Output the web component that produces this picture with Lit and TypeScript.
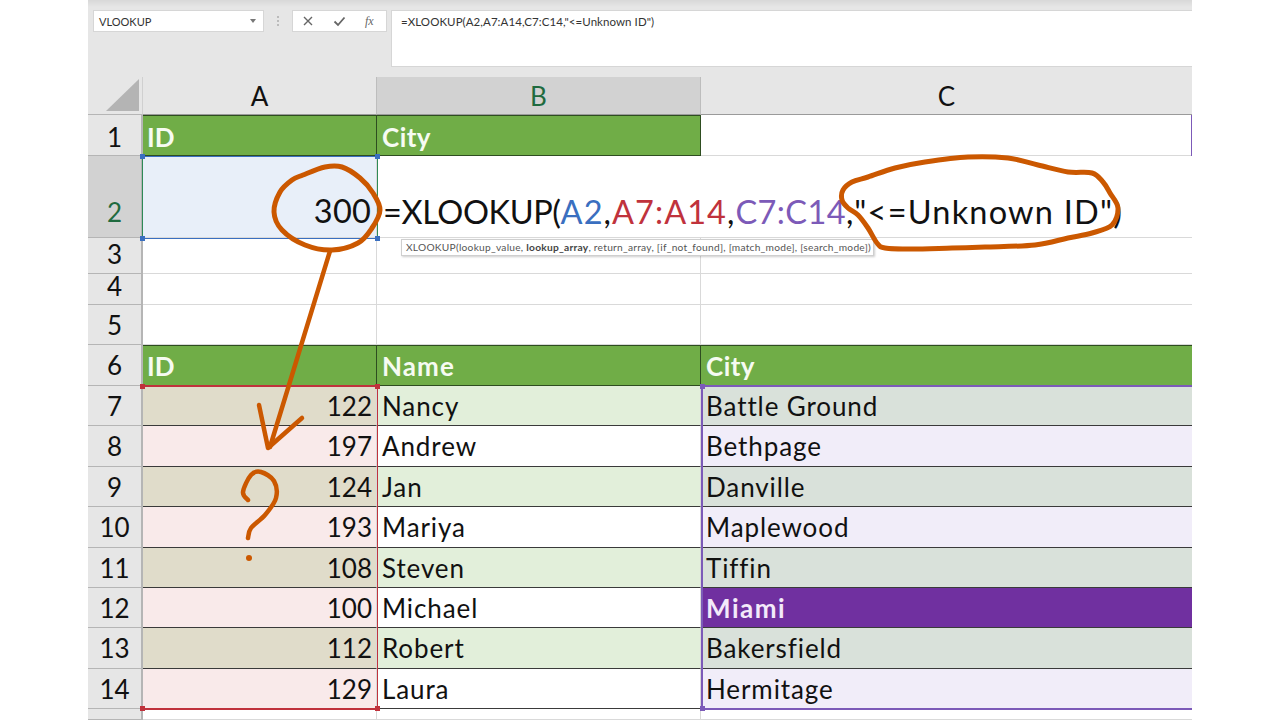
import { LitElement, html, css, svg } from "lit";
import { customElement } from "lit/decorators.js";

type P = [number, number];
function smooth(pts: P[], closed = false): string {
  const n = pts.length;
  const at = (i: number): P => (closed ? pts[(i + n) % n] : pts[Math.max(0, Math.min(n - 1, i))]);
  let d = `M${pts[0][0]} ${pts[0][1]}`;
  const last = closed ? n : n - 1;
  for (let i = 0; i < last; i++) {
    const p0 = at(i - 1), p1 = at(i), p2 = at(i + 1), p3 = at(i + 2);
    const c1: P = [p1[0] + (p2[0] - p0[0]) / 6, p1[1] + (p2[1] - p0[1]) / 6];
    const c2: P = [p2[0] - (p3[0] - p1[0]) / 6, p2[1] - (p3[1] - p1[1]) / 6];
    d += ` C${c1[0].toFixed(1)} ${c1[1].toFixed(1)} ${c2[0].toFixed(1)} ${c2[1].toFixed(1)} ${p2[0]} ${p2[1]}`;
  }
  return d;
}

const X0 = 88;
const circle: P[] = [[303,175],[325,167],[342,167],[360,178],[373,193],[380,210],[372,228],[358,243],[332,250],[305,245],[282,230],[274,212],[280,192],[292,180]];
const ellipse: P[] = [[842,200],[843,190],[852,182],[868,177],[895,168],[925,162],[968,157],[1008,158],[1038,165],[1068,172],[1092,173],[1103,182],[1110,193],[1118,208],[1112,225],[1092,233],[1068,238],[1035,245],[985,247],[952,248],[912,249],[885,248],[877,243],[868,228],[858,215],[848,208]];
const question: P[] = [[248,500],[243,492],[251,475],[261,472],[274,481],[276,498],[265,515],[251,528],[248,538]];

const table: [string, string, string, string][] = [
  ["7", "122", "Nancy", "Battle Ground"],
  ["8", "197", "Andrew", "Bethpage"],
  ["9", "124", "Jan", "Danville"],
  ["10", "193", "Mariya", "Maplewood"],
  ["11", "108", "Steven", "Tiffin"],
  ["12", "100", "Michael", "Miami"],
  ["13", "112", "Robert", "Bakersfield"],
  ["14", "129", "Laura", "Hermitage"],
];

@customElement("app-root")
export class AppRoot extends LitElement {
  static styles = css`
    :host { display: block; width: 1280px; height: 720px; background: #fff; overflow: hidden; font-family: Lato, "Liberation Sans", sans-serif; color: #111; }
    .stage { position: relative; width: 1104px; height: 720px; margin-left: 88px; background: #e6e6e6; overflow: hidden; display: flex; flex-direction: column; }
    .bar { height: 77px; flex: none; display: flex; align-items: flex-start; padding-top: 10px; box-sizing: border-box; padding-left: 5px; background: linear-gradient(#d8d8d8 0, #e6e6e6 7px); }
    .namebox { width: 171px; height: 22px; box-sizing: border-box; background: #fff; border: 1px solid #d6d6d6; font-size: 11px; display: flex; align-items: center; justify-content: space-between; padding: 0 7px 0 5px; color: #333; }
    .caret { width: 0; height: 0; border-left: 3px solid transparent; border-right: 3px solid transparent; border-top: 4px solid #777; }
    .dots { width: 28px; height: 22px; display: flex; flex-direction: column; align-items: center; justify-content: center; gap: 2px; }
    .dots i { width: 2px; height: 2px; background: #bbb; }
    .fxbox { width: 95px; height: 22px; box-sizing: border-box; background: #fff; border: 1px solid #d6d6d6; display: flex; align-items: center; gap: 19px; padding: 0 0 0 9px; }
    .fxbox svg { display: block; }
    .fx { font-family: "Liberation Serif", serif; font-style: italic; font-size: 12px; color: #666; }
    .input { margin-left: 4px; flex: 1; height: 57px; box-sizing: border-box; background: #fff; border: 1px solid #d6d6d6; border-right: 0; padding: 3px 0 0 9px; font-size: 11.5px; letter-spacing: .07px; color: #333; line-height: 15px; }
    .sheet { display: grid; grid-template-columns: 55px 234px 324px 491px; grid-template-rows: 38px 41px 82px 36px 31px 40px 41px repeat(8, 40.4px) 1fr; flex: 1; background: #fff; }
    .cell { box-sizing: border-box; border-right: 1px solid #d9d9d9; border-bottom: 1px solid #d9d9d9; font-size: 26px; line-height: 41px; padding: 0 5px; white-space: nowrap; min-width: 0; background: #fff; letter-spacing: .9px; }
    .colh { background: #e6e6e6; border-right: 1px solid #bdbdbd; border-bottom: 1px solid #9a9a9a; text-align: center; line-height: 38px; font-size: 26px; letter-spacing: 0; padding: 0 5px; }
    .rowh { background: #e6e6e6; border-right: 2px solid #b5b5b5; border-bottom: 1px solid #b5b5b5; text-align: center; padding: 0; line-height: 41px; letter-spacing: 0; }
    .lh1 { line-height: 45px; }
    .lh3 { line-height: 32px; }
    .lh4 { line-height: 24px; }
    .corner { background: #e6e6e6; border-right: 1px solid #d0d0d0; border-bottom: 1px solid #b5b5b5; display: flex; align-items: flex-end; justify-content: flex-end; padding: 0 3px 3px 0; }
    .sel { background: #d2d2d2; color: #1f6b3f; }
    .hd { background: #70ad47; color: #f6fbf2; font-weight: 700; border-right: 1px solid #2e4d20; border-bottom: 1px solid #2e4d20; border-top: 1px solid #2e4d20; line-height: 41px; letter-spacing: 1.1px; }
    .hd.city { letter-spacing: .45px; line-height: 41px; }
    .hd.top { line-height: 43px; }
    .hd.id { letter-spacing: 0; padding-left: 4px; }
    .hd.noline { border-right: 0; }
    .num { text-align: right; letter-spacing: 0; padding-right: 4px; }
    .dark { border-bottom: 1px solid #3a3a3a; }
    .a1 { background: #e0dcca; }
    .a2 { background: #f9eaea; }
    .b1 { background: #e2efda; }
    .b2 { background: #fff; }
    .c1 { background: #d9e1da; border-right: 0; }
    .c2 { background: #f1edf9; border-right: 0; }
    .miami { background: #7030a0; color: #f3eafa; font-weight: 700; border-right: 0; letter-spacing: 1.5px; }
    .tall { display: flex; align-items: flex-end; }
    .a2cell { background: #e8eff9; justify-content: flex-end; line-height: 52px; font-size: 32.5px; letter-spacing: .2px; }
    .rowh.tall { justify-content: center; line-height: 50px; }
    .formula { grid-column: 3 / 5; background: #fff; border-right: 0; line-height: 51px; font-size: 32.5px; padding-left: 6px; letter-spacing: 1.05px; }
    .fn { letter-spacing: -.4px; }
    .crit { letter-spacing: 1.2px; }
    .blue { color: #3a6fc0; }
    .red { color: #c0323c; }
    .purple { color: #7c5ab8; letter-spacing: .4px; }
    .noright { border-right: 0; }
    .range { position: absolute; box-sizing: border-box; pointer-events: none; }
    .range i { position: absolute; width: 5px; height: 5px; }
    .r-blue { left: 54px; top: 156px; width: 236px; height: 83px; border: 1.5px solid #3a6fc0; border-left-color: #2e8a57; border-right-color: #2e8a57; }
    .r-blue i { background: #3a6fc0; }
    .r-red { left: 55px; top: 385px; width: 235px; height: 325px; border-style: solid; border-color: #c0323c; border-width: 2px 1.5px 2px 0; }
    .r-red i { background: #c0323c; }
    .r-pur { left: 613px; top: 385px; width: 491px; height: 325px; border-style: solid; border-color: #7c5ab8; border-width: 2px 0 2px 2px; }
    .r-pur i { background: #7c5ab8; }
    .tl { left: -3px; top: -3px; } .tr { right: -3px; top: -3px; } .bl { left: -3px; bottom: -3px; } .br { right: -3px; bottom: -3px; }
    .tip { position: absolute; left: 313px; top: 239px; height: 17px; width: 473px; box-sizing: border-box; background: #fff; border: 1px solid #cfcfcf; box-shadow: 1px 1px 2px rgba(0,0,0,.2); font-size: 10.2px; letter-spacing: .255px; line-height: 15px; padding: 0 0 0 4px; color: #555; white-space: nowrap; }
    .tip b { color: #444; }
    .edge { position: absolute; left: 1103px; top: 115px; width: 1px; height: 41px; background: #7c5ab8; }
    .ink { position: absolute; left: 0; top: 0; pointer-events: none; }
  `;

  render() {
    return html`<div class="stage">
      <div class="bar">
        <div class="namebox"><span>VLOOKUP</span><span class="caret"></span></div>
        <div class="dots"><i></i><i></i><i></i></div>
        <div class="fxbox">
          <svg width="12" height="12" viewBox="0 0 12 12"><path d="M2 2L10 10M10 2L2 10" stroke="#666" stroke-width="1.4" fill="none"/></svg>
          <svg width="13" height="12" viewBox="0 0 13 12"><path d="M1.5 6.5L5 10L11.5 2.5" stroke="#666" stroke-width="1.8" fill="none"/></svg>
          <span class="fx">fx</span>
        </div>
        <div class="input">=XLOOKUP(A2,A7:A14,C7:C14,"&lt;=Unknown ID")</div>
      </div>
      <div class="sheet">
        <div class="cell corner"><svg width="33" height="32" viewBox="0 0 33 32"><path d="M0 32L33 32L33 0Z" fill="#b4b4b4"/></svg></div>
        <div class="cell colh">A</div>
        <div class="cell colh sel">B</div>
        <div class="cell colh noright">C</div>

        <div class="cell rowh lh1">1</div>
        <div class="cell hd id top">ID</div>
        <div class="cell hd city top">City</div>
        <div class="cell noright"></div>

        <div class="cell rowh tall sel">2</div>
        <div class="cell tall a2cell">300</div>
        <div class="cell tall formula"><span><span class="fn">=XLOOKUP(</span><span class="blue">A2</span>,<span class="red">A7:A14</span>,<span class="purple">C7:C14</span>,<span class="crit">"&lt;=Unknown ID"</span>)</span></div>

        ${[["3", "lh3"], ["4", "lh4"], ["5", ""]].map(
          ([n, c]) => html`<div class="cell rowh ${c}">${n}</div><div class="cell"></div><div class="cell"></div><div class="cell noright"></div>`
        )}

        <div class="cell rowh">6</div>
        <div class="cell hd id">ID</div>
        <div class="cell hd">Name</div>
        <div class="cell hd city noline">City</div>

        ${table.map(
          ([r, id, name, city], i) => html`
            <div class="cell rowh">${r}</div>
            <div class="cell num dark ${i % 2 ? "a2" : "a1"}">${id}</div>
            <div class="cell dark ${i % 2 ? "b2" : "b1"}">${name}</div>
            <div class="cell dark ${city === "Miami" ? "miami" : i % 2 ? "c2" : "c1"}">${city}</div>
          `
        )}

        <div class="cell rowh"></div>
        <div class="cell"></div>
        <div class="cell"></div>
        <div class="cell noright"></div>
      </div>

      <div class="edge"></div>
      <div class="range r-blue"><i class="tl"></i><i class="tr"></i><i class="bl"></i><i class="br"></i></div>
      <div class="range r-red"><i class="tl"></i><i class="tr"></i><i class="bl"></i><i class="br"></i></div>
      <div class="range r-pur"><i class="tl"></i><i class="bl"></i></div>
      <div class="tip">XLOOKUP(lookup_value, <b>lookup_array</b>, return_array, [if_not_found], [match_mode], [search_mode])</div>

      <svg class="ink" width="1104" height="720" viewBox="${X0} 0 1104 720" fill="none" stroke="#cb5800" stroke-width="5" stroke-linecap="round" stroke-linejoin="round">
        ${svg`
          <path d=${smooth(circle, true)}/>
          <path d=${smooth(ellipse, true)}/>
          <path d="M330 251L270 447" stroke-width="4.5"/>
          <path d="M259 405L268 448L302 418" stroke-width="4.5"/>
          <path d=${smooth(question)} stroke-width="4.5"/>
          <circle cx="249" cy="558" r="3" fill="#cb5800" stroke="none"/>
        `}
      </svg>
    </div>`;
  }
}
